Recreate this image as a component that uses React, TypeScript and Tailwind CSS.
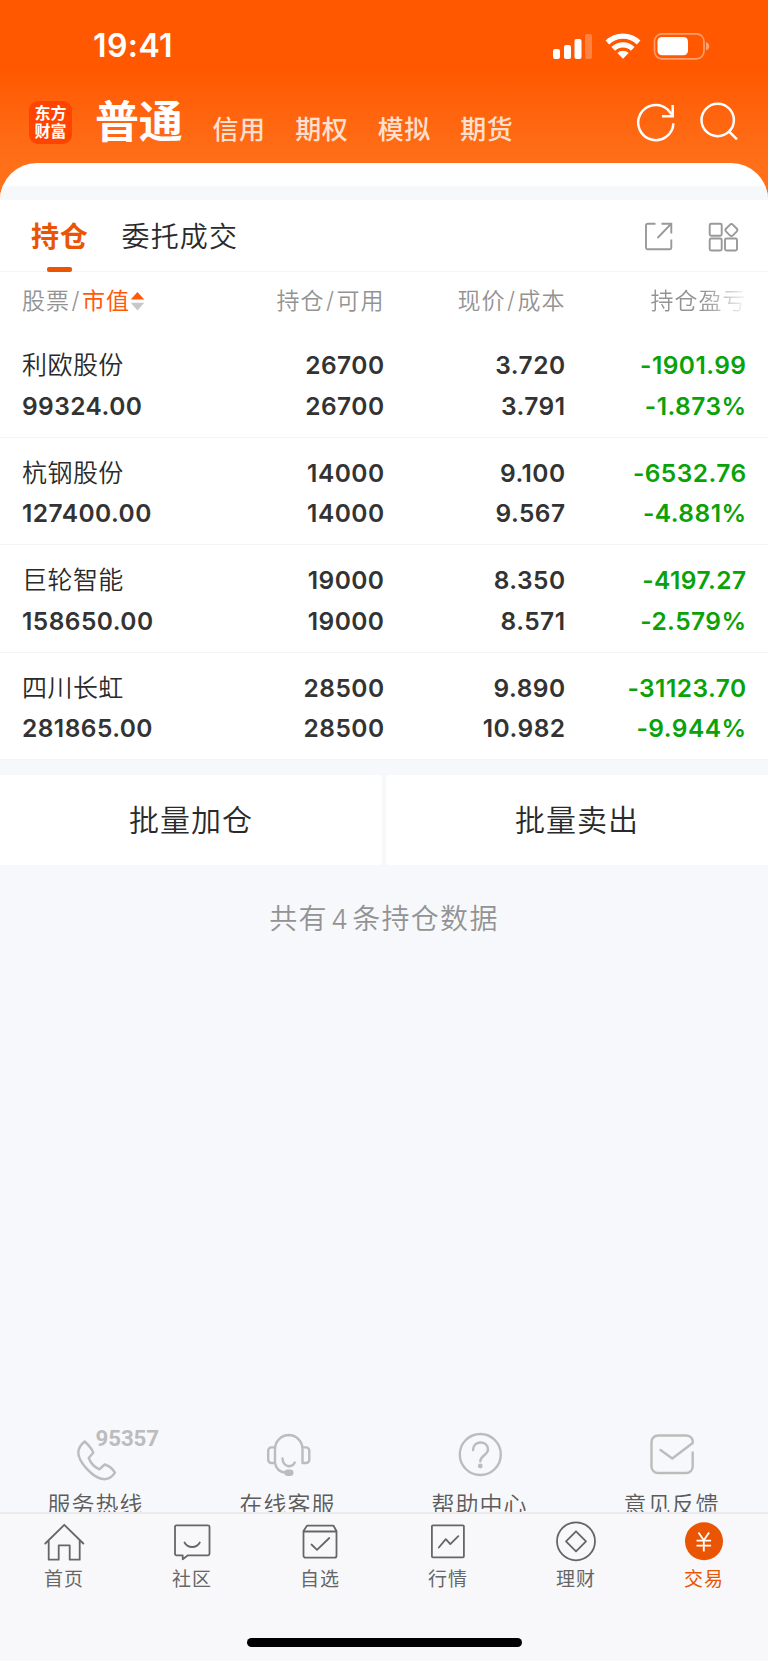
import type { ReactNode } from "react";

const holdings = [
  { name: "利欧股份", value: "99324.00", held: "26700", free: "26700", price: "3.720", cost: "3.791", pnl: "-1901.99", pct: "-1.873%" },
  { name: "杭钢股份", value: "127400.00", held: "14000", free: "14000", price: "9.100", cost: "9.567", pnl: "-6532.76", pct: "-4.881%" },
  { name: "巨轮智能", value: "158650.00", held: "19000", free: "19000", price: "8.350", cost: "8.571", pnl: "-4197.27", pct: "-2.579%" },
  { name: "四川长虹", value: "281865.00", held: "28500", free: "28500", price: "9.890", cost: "10.982", pnl: "-31123.70", pct: "-9.944%" },
];

function StatusBar() {
  return (
    <div className="flex h-[92px] items-center pr-[57px] pl-[93px] text-white">
      <span className="text-[32px] leading-[32px] font-semibold tracking-[0.4px]">19:41</span>
      <svg className="ml-auto" width="158" height="28" viewBox="0 0 158 28" fill="none">
        <rect x="0" y="17" width="7" height="10" rx="2" fill="#fff" />
        <rect x="11" y="13" width="7" height="14" rx="2" fill="#fff" />
        <rect x="21.5" y="7" width="7" height="20" rx="2" fill="#fff" />
        <rect x="32" y="2" width="7" height="25" rx="2" fill="#fff" fillOpacity=".25" />
        <path d="M52.6 8.6a24.6 24.6 0 0 1 34.8 0l-3.6 3.9a19.4 19.4 0 0 0-27.6 0z" fill="#fff" />
        <path d="M58.4 14.9a16.5 16.5 0 0 1 23.2 0l-3.7 3.8a11.4 11.4 0 0 0-15.8 0z" fill="#fff" />
        <path d="M64.4 21.1a8 8 0 0 1 11.2 0L70 26.8z" fill="#fff" />
        <rect x="101.5" y="1.8" width="49.5" height="25" rx="7.5" stroke="#fff" strokeOpacity=".42" strokeWidth="1.7" />
        <rect x="104.500" y="5" width="30.5" height="18.3" rx="4.5" fill="#fff" />
        <path d="M153 10c4.4 1.3 4.4 7.2 0 8.5z" fill="#fff" fillOpacity=".45" />
      </svg>
    </div>
  );
}

function TopTabs() {
  return (
    <div className="flex h-[71px] items-start pr-[30px] pl-[29px]">
      <div className="mt-[9px] flex h-[43px] w-[43px] flex-col items-center justify-center rounded-[9px] bg-[#ff4400] text-[16px] leading-[17.5px] font-bold text-white">
        <span>东方</span>
        <span>财富</span>
      </div>
      <span className="mt-[8px] ml-[23px] text-[44px] leading-[44px] font-bold tracking-[-0.2px] text-white">普通</span>
      <div className="mt-[23px] ml-[30px] flex gap-[29.5px] text-[26px] leading-[29px] font-medium tracking-[0.5px] text-[#ffe0d0]">
        <span>信用</span>
        <span>期权</span>
        <span>模拟</span>
        <span>期货</span>
      </div>
      <svg className="mt-[8px] ml-auto" width="102" height="44" viewBox="0 0 102 44" fill="none" stroke="#fff" strokeWidth="2.5">
        <path d="M37.4 23.2A17.6 17.6 0 1 1 31.5 9.4L36.6 15.2" />
        <path d="M36.7 5v11.2H26" />
        <circle cx="81.7" cy="20" r="16.2" />
        <path d="M93.2 31.6l7.8 7.8" />
      </svg>
    </div>
  );
}

function SectionTabs() {
  return (
    <div className="flex h-[70px] items-start border-b border-[#f4f5f7] pr-[29px] pl-[31px]">
      <div className="flex flex-col items-center text-[28px] leading-[36px] text-[#ea5504]">
        <span className="mt-[17px] font-bold tracking-[0.8px]">持仓</span>
        <span className="mt-[12px] h-[5px] w-[25px] rounded-[2px] bg-[#ea5504]" />
      </div>
      <span className="mt-[17px] ml-[33px] text-[28px] leading-[36px] font-[350] tracking-[1.1px] text-[#2a2a2a]">委托成交</span>
      <svg className="mt-[19px] ml-auto" width="96" height="31" viewBox="0 0 96 31" fill="none" stroke="#999" strokeWidth="1.9">
        <path d="M12.5 2.7H4.5a1.5 1.5 0 0 0-1.5 1.5v22.6a1.5 1.5 0 0 0 1.5 1.5h22.3a1.5 1.5 0 0 0 1.5-1.5V18.5M18.5 2.7h9.8v9.8M28.3 2.700L14.5 17" />
        <rect x="66.7" y="2.7" width="12" height="12" rx="1.5" />
        <rect x="66.7" y="17.5" width="12" height="12" rx="1.5" />
        <rect x="82" y="17.5" width="12" height="12" rx="1.5" />
        <rect x="83.6" y="4.3" width="9.6" height="9.6" rx="2.2" transform="rotate(45 88.400 9.1)" />
      </svg>
    </div>
  );
}

const columns = "grid grid-cols-[200px_161px_181px_181px] px-[22px]";

function TableHead() {
  return (
    <div className={`${columns} h-[58px] items-center text-[23px] leading-[30px] font-[350] tracking-[1px] text-[#939393]`}>
      <div className="flex items-center">
        <span>股票</span>
        <span className="w-[12px] text-center">/</span>
        <span className="font-normal text-[#ff5a0a]">市值</span>
        <svg width="15" height="20" viewBox="0 0 15 20">
          <path d="M7.5 1l6.8 7.6H.7z" fill="#ff5a0a" />
          <path d="M7.5 19.4l6.8-7.6H.7z" fill="#c8c8c8" />
        </svg>
      </div>
      <div className="-mr-[1.5px] flex justify-end">
        <span>持仓</span>
        <span className="w-[12px] text-center">/</span>
        <span>可用</span>
      </div>
      <div className="-mr-[1.5px] flex justify-end">
        <span>现价</span>
        <span className="w-[12px] text-center">/</span>
        <span>成本</span>
      </div>
      <div className="-mr-[1.5px] bg-linear-to-r from-[#939393] from-76% to-[#93939310] to-100% bg-clip-text text-right text-transparent">持仓盈亏</div>
    </div>
  );
}

function Pair({ top, bottom, className = "" }: { top: string; bottom: string; className?: string }) {
  return (
    <div className={`-mr-[1.5px] flex flex-col items-end ${className}`}>
      <span>{top}</span>
      <span>{bottom}</span>
    </div>
  );
}

function HoldingsTable() {
  return (
    <div>
      {holdings.map((h) => (
        <div key={h.name} className={`${columns} h-[107.5px] border-b border-[#f3f4f6] pt-[15px] text-[24.5px] leading-[40.5px] font-semibold tracking-[0.45px] text-[#333]`}>
          <div className="flex flex-col">
            <span className="text-[25px] font-[350] text-[#2a2a2a]">{h.name}</span>
            <span>{h.value}</span>
          </div>
          <Pair top={h.held} bottom={h.free} />
          <Pair top={h.price} bottom={h.cost} />
          <Pair top={h.pnl} bottom={h.pct} className="text-[#09a209]" />
        </div>
      ))}
    </div>
  );
}

function Service({ label, children }: { label: string; children: ReactNode }) {
  return (
    <div className="flex w-[192px] flex-col items-center">
      <svg className="shrink-0" width="144" height="60" viewBox="0 1 144 60" fill="none" stroke="#bcbcbc" strokeWidth="2.4" strokeLinecap="round" strokeLinejoin="round">
        {children}
      </svg>
      <span className="mt-[4px] -ml-[1px] text-[23px] leading-[34px] font-[350] tracking-[1px] text-[#5c5c5c]">{label}</span>
    </div>
  );
}

function Services() {
  return (
    <div className="flex h-[88px] overflow-hidden">
      <Service label="服务热线">
        <path d="M60.7 18.5C57 21.5 54.3 24.5 54.3 29.5 54.3 38.5 69 56 80.5 56.2c4.5 0 8-2.7 10.5-6.5-2-3.7-6-6.7-10.3-8.2l-5.4 4.8C71 44.5 66.5 39.5 64.7 35l4.6-5.3C67.5 25 64 21.5 60.7 18.5z" />
        <text x="71.5" y="22.5" fill="#bcbcbc" stroke="none" fontSize="22.3" className="font-[Roboto] font-bold tracking-[-0.1px]">95357</text>
      </Service>
      <Service label="在线客服">
        <path d="M59 40V26a14 14 0 0 1 14-14h-.5a14 14 0 0 1 14 14V40H90a3.3 3.3 0 0 0 3.3-3.3v-9A3.3 3.3 0 0 0 90 24.400h-3.5M59 24.400h-3.5a3.3 3.3 0 0 0-3.3 3.3v9a3.3 3.3 0 0 0 3.3 3.3H59c1 6 5 9 10.5 9.7" />
        <path d="M66.5 35.500c.6 9 9.5 9.7 12.3 4" />
        <rect x="69.5" y="47.7" width="6.8" height="4.2" rx="2.1" fill="#bcbcbc" />
      </Service>
      <Service label="帮助中心">
        <circle cx="72.300" cy="31.5" r="20.5" />
        <path d="M65 27c0-10 15-10 15-.5 0 5.500-7.700 6-7.700 11.800" />
        <circle cx="72.300" cy="43" r="1.2" fill="#bcbcbc" />
      </Service>
      <Service label="意见反馈">
        <path d="M92.7 29.5v14a6.5 6.5 0 0 1-6.5 6.5H58a6.500 6.500 0 0 1-6.500-6.500V19a6.500 6.500 0 0 1 6.500-6.500h28.500a6.300 6.300 0 0 1 6.200 7.500L72.300 35.500 60.500 27" />
      </Service>
    </div>
  );
}

function NavItem({ label, active = false, children }: { label: string; active?: boolean; children: ReactNode }) {
  return (
    <div className={`flex w-[128px] flex-col items-center ${active ? "text-[#ea5504]" : "text-[#666]"}`}>
      <svg width="44" height="44" viewBox="0 0 44 44" fill="none" stroke="currentColor" strokeWidth="1.8" strokeLinecap="round" strokeLinejoin="round">
        {children}
      </svg>
      <span className="mt-[4px] text-[19px] leading-[24px] tracking-[0.9px]">{label}</span>
    </div>
  );
}

function BottomNav() {
  return (
    <nav className="flex h-[150px] flex-col border-t-2 border-b border-t-[#ebebee] border-b-white bg-[#f8f8fb]">
      <div className="flex pt-[6px]">
        <NavItem label="首页">
          <path d="M3.300 23.500L22.300 4.800l19 18.700M6.700 20.500v19.200h10V25.300h11v14.400h10V20.500" />
        </NavItem>
        <NavItem label="社区">
          <path d="M6.500 5.300h31.500a1.500 1.500 0 0 1 1.500 1.500v27a1.500 1.500 0 0 1-1.500 1.500H18l-5.300 4v-4H6.500A1.500 1.500 0 0 1 5 33.800v-27a1.500 1.500 0 0 1 1.500-1.500z" />
          <path d="M14.500 22.500c3.300 6 12 6 15.300 0" />
        </NavItem>
        <NavItem label="自选">
          <path d="M5.500 11l3.500-5.300h26.500L38.500 11v24.700a2 2 0 0 1-2 2h-29a2 2 0 0 1-2-2zM5.500 11.500h33M13.500 24.500l5.500 5.300 12.300-11.800" />
        </NavItem>
        <NavItem label="行情">
          <rect x="5.900" y="5.300" width="32" height="32" rx="1" />
          <path d="M12.800 27.500l7-8.300 4.500 5 8-8" />
        </NavItem>
        <NavItem label="理财">
          <circle cx="22" cy="21.300" r="19" />
          <path d="M22 11.300l10 10-10 10-10-10z" />
        </NavItem>
        <NavItem label="交易" active>
          <circle cx="22" cy="21.300" r="19" fill="currentColor" stroke="none" />
          <path stroke="#fff" strokeLinecap="butt" d="M16.500 12.500l5.300 7.700 5.300-7.700M21.800 20v11.500M14.500 20.700h14.600M14.500 25.700h14.600" />
        </NavItem>
      </div>
      <div className="mt-auto mb-[14px] h-[9px] w-[275px] self-center rounded-full bg-black" />
    </nav>
  );
}

export default function App() {
  return (
    <main className="flex h-[1662px] w-[768px] flex-col overflow-hidden bg-[#f7f8fb] font-[Inter,'Noto_Sans_CJK_SC',sans-serif] whitespace-nowrap">
      <header className="bg-linear-to-b from-[#ff5800] from-[68px] to-[#ff7019] to-[165px]">
        <StatusBar />
        <TopTabs />
        <div className="h-[39px] overflow-hidden rounded-t-[37px] bg-white pt-[23px]">
          <div className="h-[14px] bg-[#f7f8fa]" />
        </div>
      </header>
      <section className="bg-white">
        <SectionTabs />
        <TableHead />
        <HoldingsTable />
      </section>
      <div className="mt-[15px] flex h-[90px] gap-[4px] text-[30px] font-[350] tracking-[1px] text-[#2a2a2a]">
        <button className="flex-1 bg-white">批量加仓</button>
        <button className="flex-1 bg-white">批量卖出</button>
      </div>
      <p className="mt-[35px] text-center text-[28px] leading-[38px] font-[350] tracking-[1.3px] text-[#939393]">
        共有<span className="mx-[3px] text-[27px]">4</span>条持仓数据
      </p>
      <div className="mt-auto">
        <Services />
        <BottomNav />
      </div>
    </main>
  );
}
